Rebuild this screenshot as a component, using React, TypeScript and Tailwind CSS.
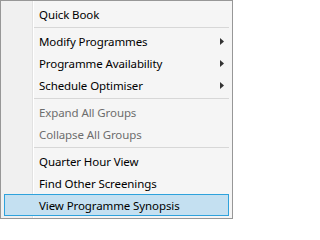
type Item =
  | { kind: "item"; label: string; submenu?: boolean; disabled?: boolean; active?: boolean }
  | { kind: "sep" };

const items: Item[] = [
  { kind: "item", label: "Quick Book" },
  { kind: "sep" },
  { kind: "item", label: "Modify Programmes", submenu: true },
  { kind: "item", label: "Programme Availability", submenu: true },
  { kind: "item", label: "Schedule Optimiser", submenu: true },
  { kind: "sep" },
  { kind: "item", label: "Expand All Groups", disabled: true },
  { kind: "item", label: "Collapse All Groups", disabled: true },
  { kind: "sep" },
  { kind: "item", label: "Quarter Hour View" },
  { kind: "item", label: "Find Other Screenings" },
  { kind: "item", label: "View Programme Synopsis", active: true },
];

function Arrow() {
  return (
    <svg width="4" height="7" viewBox="0 0 4 7" className="shrink-0">
      <path d="M0 0 L4 3.5 L0 7 Z" fill="#333333" />
    </svg>
  );
}

export default function App() {
  return (
    <div
      className="flex h-[219px] w-[233px] flex-col border border-[#979797] bg-[linear-gradient(to_right,#f0f0f0_31px,#e2e2e2_31px,#e2e2e2_32px,#ffffff_32px,#ffffff_33px,#f5f5f5_33px)] px-[3px] py-[2px]"
      style={{ fontFamily: '"Noto Sans", "Open Sans", sans-serif' }}
    >
      {items.map((it, i) =>
        it.kind === "sep" ? (
          <div key={i} className="flex h-[5px] items-center pl-[30px]">
            <div className="h-px w-full bg-[#d7d7d7]" />
          </div>
        ) : (
          <div
            key={i}
            className={
              it.active
                ? "flex h-[22px] items-center justify-between border border-[#2ea2dc] bg-[#c4e0f1] pl-[34px] pr-[5px] text-[11.5px] tracking-[-0.1px] text-black"
                : it.disabled
                  ? "flex h-[22px] items-center justify-between pl-[35px] pr-[5px] text-[11.5px] tracking-[-0.1px] text-[#6d6d6d]"
                  : "flex h-[22px] items-center justify-between pl-[35px] pr-[5px] text-[11.5px] tracking-[-0.1px] text-black"
            }
          >
            <span className="whitespace-nowrap pt-px leading-none">{it.label}</span>
            {it.submenu && <Arrow />}
          </div>
        )
      )}
    </div>
  );
}
